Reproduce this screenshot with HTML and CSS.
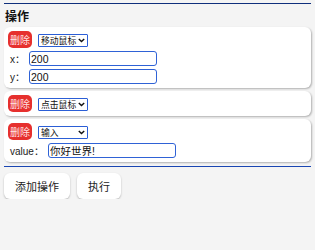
FILE: index.html
```html
<!DOCTYPE html>
<html lang="zh">
<head>
<meta charset="utf-8">
<title>操作</title>
<link rel="stylesheet" href="styles.css">
</head>
<body>
<div class="page">
  <div class="topline"></div>
  <h3 class="title">操作</h3>

  <div class="card">
    <div class="row head">
      <button class="del">删除</button>
      <span class="sel">
        <select><option>移动鼠标</option><option>点击鼠标</option><option>输入</option></select>
        <svg class="chev" width="7" height="5" viewBox="0 0 7 5"><path d="M0.8 0.9 L3.5 3.6 L6.2 0.9" fill="none" stroke="#111" stroke-width="1.4"/></svg>
      </span>
    </div>
    <div class="row field"><label>x：</label><input type="text" value="200"></div>
    <div class="row field"><label>y：</label><input type="text" value="200"></div>
  </div>

  <div class="card">
    <div class="row head">
      <button class="del">删除</button>
      <span class="sel">
        <select><option>点击鼠标</option><option>移动鼠标</option><option>输入</option></select>
        <svg class="chev" width="7" height="5" viewBox="0 0 7 5"><path d="M0.8 0.9 L3.5 3.6 L6.2 0.9" fill="none" stroke="#111" stroke-width="1.4"/></svg>
      </span>
    </div>
  </div>

  <div class="card">
    <div class="row head">
      <button class="del">删除</button>
      <span class="sel">
        <select><option>输入</option><option>移动鼠标</option><option>点击鼠标</option></select>
        <svg class="chev" width="7" height="5" viewBox="0 0 7 5"><path d="M0.8 0.9 L3.5 3.6 L6.2 0.9" fill="none" stroke="#111" stroke-width="1.4"/></svg>
      </span>
    </div>
    <div class="row field"><label>value：</label><input type="text" value="你好世界!"></div>
  </div>

  <div class="bottomline"></div>

  <div class="actions">
    <button class="btn">添加操作</button>
    <button class="btn">执行</button>
  </div>
</div>
</body>
</html>
```

FILE: styles.css
```css
html, body {
  margin: 0;
  padding: 0;
  background: #f4f4f4;
}

body {
  font-family: "Liberation Sans", "Noto Sans CJK SC", sans-serif;
  color: #222;
}

.page {
  padding: 0 4px;
}

.topline {
  margin-top: 3px;
  height: 1px;
  background: #0f2f7c;
}

.title {
  margin: 6px 0 3px 1px;
  font-size: 12px;
  line-height: 14px;
  font-weight: bold;
  color: #111;
}

.card {
  background: #fff;
  border-radius: 6px;
  box-shadow: 1px 1px 2px rgba(0, 0, 0, 0.28);
  padding: 4px;
  margin-bottom: 3px;
  display: flex;
  flex-direction: column;
  gap: 3px;
}

.row {
  display: flex;
  align-items: center;
}

.head {
  gap: 6px;
  align-items: flex-end;
}

.del {
  height: 17px;
  width: 24px;
  padding: 0;
  border: none;
  border-radius: 5px;
  background: #e6302e;
  color: #ffe3e3;
  font-family: "Noto Sans CJK SC", sans-serif;
  font-size: 10px;
  line-height: 17px;
}

.sel {
  position: relative;
  display: inline-flex;
  margin-bottom: 1px;
}

.sel select {
  appearance: none;
  -webkit-appearance: none;
  box-sizing: border-box;
  width: 50px;
  height: 13px;
  margin: 0;
  padding: 0 0 0 2px;
  border: 1px solid #2b5ed6;
  border-radius: 1px;
  background: #fff;
  color: #111;
  font-family: "Noto Sans CJK SC", sans-serif;
  font-size: 8.8px;
  line-height: 11px;
}

.chev {
  position: absolute;
  right: 3px;
  top: 4px;
  pointer-events: none;
}

.field label {
  padding-left: 2px;
  margin-right: 4px;
  font-size: 10px;
  color: #222;
}

.field input {
  box-sizing: border-box;
  width: 128px;
  height: 15px;
  margin: 0;
  padding: 0 1px;
  border: 1.5px solid #2f62d6;
  border-radius: 3px;
  background: #fff;
  color: #111;
  font-family: "Liberation Sans", "Noto Sans CJK SC", sans-serif;
  font-size: 10.5px;
  outline: none;
}

.bottomline {
  margin-top: 4px;
  height: 1px;
  background: #1a46b2;
}

.actions {
  display: flex;
  gap: 7px;
  margin-top: 6px;
}

.btn {
  height: 26px;
  padding: 0 11px;
  border: none;
  border-radius: 6px;
  background: #fff;
  box-shadow: 0 1px 2px rgba(0, 0, 0, 0.25);
  color: #222;
  font-family: "Noto Sans CJK SC", sans-serif;
  font-size: 11px;
}
```
